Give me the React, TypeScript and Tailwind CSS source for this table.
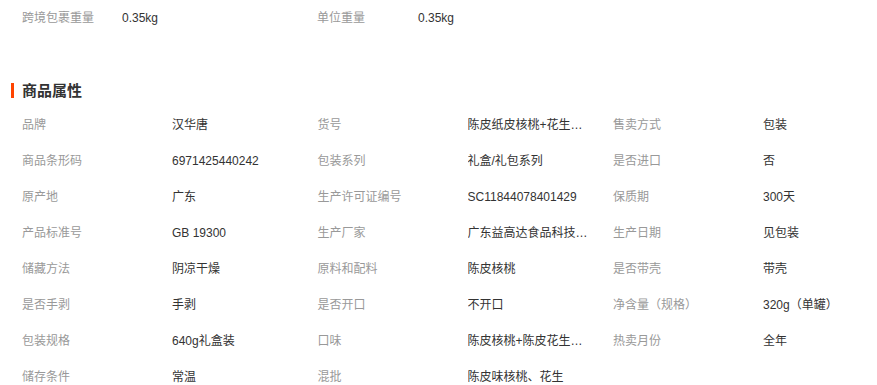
import React from "react";

const rows: [string, string][][] = [
  [["品牌", "汉华唐"], ["货号", "陈皮纸皮核桃+花生组合装"], ["售卖方式", "包装"]],
  [["商品条形码", "6971425440242"], ["包装系列", "礼盒/礼包系列"], ["是否进口", "否"]],
  [["原产地", "广东"], ["生产许可证编号", "SC11844078401429"], ["保质期", "300天"]],
  [["产品标准号", "GB 19300"], ["生产厂家", "广东益高达食品科技有限公司"], ["生产日期", "见包装"]],
  [["储藏方法", "阴凉干燥"], ["原料和配料", "陈皮核桃"], ["是否带壳", "带壳"]],
  [["是否手剥", "手剥"], ["是否开口", "不开口"], ["净含量（规格）", "320g（单罐）"]],
  [["包装规格", "640g礼盒装"], ["口味", "陈皮核桃+陈皮花生组合"], ["热卖月份", "全年"]],
  [["储存条件", "常温"], ["混批", "陈皮味核桃、花生"]],
];

export default function App() {
  return (
    <div
      className="w-[877px] h-[385px] overflow-hidden bg-white text-[12px]"
      style={{ fontFamily: '"Liberation Sans", "Noto Sans CJK SC", sans-serif' }}
    >
      <div className="flex pt-[10px] h-[17px] box-content leading-[17px]">
        <div className="ml-[22px] w-[100px] text-[#999]">跨境包裹重量</div>
        <div className="w-[195px] text-[#333]">0.35kg</div>
        <div className="w-[101px] text-[#999]">单位重量</div>
        <div className="text-[#333]">0.35kg</div>
      </div>
      <div className="flex items-center mt-[56px] h-[15px]">
        <div className="ml-[11px] w-[3px] h-[15px] bg-[#ff4400]" />
        <div className="ml-[8px] text-[15px] font-bold text-[#333] leading-[15px]">商品属性</div>
      </div>
      <div className="mt-[19px] ml-[22px] flex flex-col">
        {rows.map((r, i) => (
          <div key={i} className="flex h-[36px] leading-[17px]">
            {r.map(([k, v], j) => (
              <div key={j} className="flex">
                <div className="w-[150px] text-[#999] whitespace-nowrap">{k}</div>
                <div className="w-[145.5px]">
                  <div className="max-w-[124px] truncate text-[#333]">{v}</div>
                </div>
              </div>
            ))}
          </div>
        ))}
      </div>
    </div>
  );
}
